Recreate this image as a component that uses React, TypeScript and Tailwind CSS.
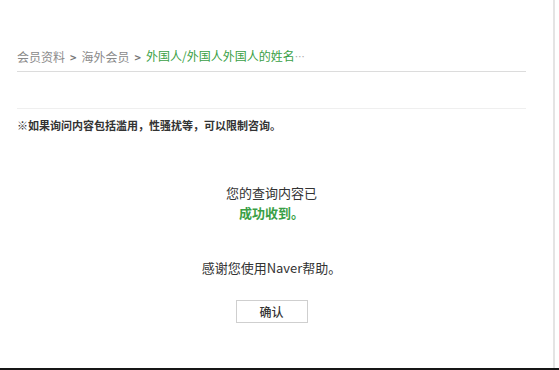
import React from "react";

export default function App() {
  return (
    <div
      className="w-[559px] h-[370px] bg-white flex flex-col overflow-hidden"
      style={{ fontFamily: '"Noto Sans CJK SC", "Noto Sans", sans-serif' }}
    >
      <div className="flex flex-1">
        <div className="w-[555px] border-r-2 border-[#e4e4e4] pl-[17px] pr-[27px]">
          {/* breadcrumb */}
          <div className="pt-[48px] pb-[6px] border-b border-[#dcdcdc] text-[12px] leading-[16px] text-[#8a8a8a] flex items-center gap-[5px] whitespace-nowrap">
            <span>会员资料</span>
            <span className="text-[#777] font-bold text-[11px]">&gt;</span>
            <span>海外会员</span>
            <span className="text-[#777] font-bold text-[11px]">&gt;</span>
            <span className="text-[#3a9f46]">
              外国人/外国人外国人的姓名<span className="text-[#aaa] text-[10px]">…</span>
            </span>
          </div>

          {/* notice */}
          <div className="mt-[36px] border-t border-[#efefef] pt-[8px]">
            <p className="text-[11px] leading-[16px] font-bold text-[#333]">
              ※如果询问内容包括滥用，性骚扰等，可以限制咨询。
            </p>
          </div>

          {/* result */}
          <div className="mt-[50px] flex flex-col items-center text-[13px] leading-[20px] text-[#333]">
            <p>您的查询内容已</p>
            <p className="text-[#3a9f46] font-bold">成功收到。</p>
            <p className="mt-[35px]">感谢您使用Naver帮助。</p>
            <button className="mt-[22px] w-[72px] h-[23px] border border-[#cfcfcf] bg-white text-[12px] text-[#333] font-medium">
              确认
            </button>
          </div>
        </div>
      </div>
      <div className="h-[2px] bg-[#161616]" />
    </div>
  );
}
